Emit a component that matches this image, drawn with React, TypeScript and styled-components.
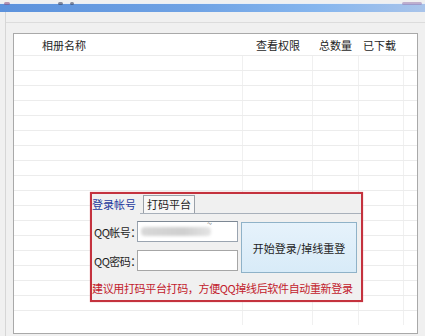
import React from "react";
import styled, { createGlobalStyle } from "styled-components";

const GlobalStyle = createGlobalStyle`
  html, body {
    margin: 0;
    padding: 0;
    background: #f0f0f0;
  }
  body {
    font-family: "Noto Sans CJK SC", "Noto Sans", sans-serif;
    font-size: 11px;
    color: #222;
    width: 425px;
    height: 336px;
    overflow: hidden;
  }
`;

const Window = styled.div`
  width: 425px;
  height: 336px;
  display: flex;
  flex-direction: column;
`;

const TitleBar = styled.div`
  height: 8px;
  margin-top: 3px;
  background: linear-gradient(90deg, #5c92dc 0%, #6fa2e4 45%, #86b6ee 75%, #a9c4ea 100%);
  position: relative;
  border-top: 1px solid #e8eef6;
`;

const TitleSmudge = styled.span<{ $left: number; $w: number; $color: string }>`
  position: absolute;
  top: -2px;
  left: ${(p) => p.$left}px;
  width: ${(p) => p.$w}px;
  height: 3px;
  border-radius: 2px;
  background: ${(p) => p.$color};
  opacity: 0.55;
  filter: blur(0.6px);
`;

const Body = styled.div`
  flex: 1;
  display: flex;
  flex-direction: column;
  margin-left: 5px;
  border-left: 1px solid #d6d6d6;
  background: #f0f0f0;
`;

const ToolStrip = styled.div`
  height: 10px;
  border-bottom: 1px solid #dcdcdc;
`;

const ListArea = styled.div`
  padding: 10px 6px 0 7px;
`;

const ListFrame = styled.div`
  position: relative;
  width: 403px;
  height: 299px;
  border: 1px solid #a9a9a9;
  background: #fff;
  overflow: hidden;
`;

const Cols = "229px 70px 46px 45px 1fr";

const HeaderRow = styled.div`
  display: grid;
  grid-template-columns: ${Cols};
  height: 21px;
  align-items: center;
  font-size: 11px;
  color: #1e1e1e;
`;

const HeadCell = styled.div<{ $pad: number }>`
  padding-left: ${(p) => p.$pad}px;
  white-space: nowrap;
`;

const Row = styled.div`
  display: grid;
  grid-template-columns: ${Cols};
  height: 15px;
  border-top: 1px solid #ececec;
  box-sizing: border-box;
`;

const Cell = styled.div`
  border-right: 1px solid #f0f0f0;
`;

const LoginPanel = styled.div`
  position: absolute;
  left: 76px;
  top: 158px;
  width: 269px;
  height: 106px;
  border: 2px solid #c4323e;
  background: #f0f0f0;
  box-shadow: 0 0 1px #e08088;
  display: flex;
  flex-direction: column;
`;

const TabBar = styled.div`
  display: flex;
  align-items: flex-end;
  height: 19px;
  border-bottom: 1px solid #a8b0ba;
`;

const Tab = styled.div<{ $active?: boolean }>`
  height: ${(p) => (p.$active ? 19 : 17)}px;
  line-height: ${(p) => (p.$active ? 19 : 17)}px;
  padding: 0 ${(p) => (p.$active ? 4 : 3)}px 0 ${(p) => (p.$active ? 0 : 3)}px;
  margin-left: ${(p) => (p.$active ? 0 : 3)}px;
  font-size: 11px;
  color: ${(p) => (p.$active ? "#1f3a9e" : "#1e1e1e")};
  background: ${(p) => (p.$active ? "#f0f0f0" : "#f7f7f7")};
  border: ${(p) => (p.$active ? "none" : "1px solid #9aa0a8")};
  border-bottom: none;
  margin-bottom: ${(p) => (p.$active ? -1 : 0)}px;
  white-space: nowrap;
`;

const TabPage = styled.div`
  flex: 1;
  display: flex;
  flex-direction: column;
  padding: 7px 0 0 2px;
`;

const FormRow = styled.div`
  display: flex;
  gap: 3px;
`;

const Fields = styled.div`
  display: flex;
  flex-direction: column;
  gap: 8px;
`;

const Field = styled.div`
  display: flex;
  align-items: center;
  gap: 2px;
`;

const Label = styled.span`
  width: 41px;
  font-size: 11px;
  color: #1e1e1e;
  white-space: nowrap;
  letter-spacing: -0.5px;
`;

const Input = styled.div<{ $filled?: boolean }>`
  position: relative;
  width: 99px;
  height: 19px;
  border: 1px solid ${(p) => (p.$filled ? "#9aa4b0" : "#a6a6a6")};
  border-top-color: ${(p) => (p.$filled ? "#7d8894" : "#a6a6a6")};
  background: #fff;
`;

const Blur = styled.span`
  position: absolute;
  left: 3px;
  top: 5px;
  width: 70px;
  height: 9px;
  border-radius: 4px;
  background: linear-gradient(90deg, #d8d8d8, #cfcfcf 60%, #e4e4e4);
  filter: blur(1.5px);
`;

const Tilde = styled.span`
  position: absolute;
  right: 25px;
  top: -5px;
  font-size: 9px;
  color: #777;
`;

const StartButton = styled.button`
  width: 116px;
  height: 51px;
  margin-top: 1px;
  border: 1px solid #8fb2c8;
  background: linear-gradient(180deg, #e6f2fb 0%, #d8ebf8 100%);
  font-family: inherit;
  font-size: 11px;
  color: #1e1e1e;
  padding: 0;
  cursor: pointer;
  white-space: nowrap;
`;

const Hint = styled.div`
  margin-top: 7px;
  margin-left: -2px;
  font-size: 11px;
  color: #c2202c;
  white-space: nowrap;
  letter-spacing: -0.35px;
`;

const rows = Array.from({ length: 18 });

export default function App() {
  return (
    <>
      <GlobalStyle />
      <Window>
        <TitleBar>
          <TitleSmudge $left={4} $w={6} $color="#8a4a7a" />
          <TitleSmudge $left={58} $w={5} $color="#333a55" />
          <TitleSmudge $left={70} $w={4} $color="#333a55" />
          <TitleSmudge $left={402} $w={20} $color="#9a7ab0" />
        </TitleBar>
        <Body>
          <ToolStrip />
          <ListArea>
            <ListFrame>
              <HeaderRow>
                <HeadCell $pad={28}>相册名称</HeadCell>
                <HeadCell $pad={13}>查看权限</HeadCell>
                <HeadCell $pad={6}>总数量</HeadCell>
                <HeadCell $pad={4}>已下载</HeadCell>
                <HeadCell $pad={0} />
              </HeaderRow>
              {rows.map((_, i) => (
                <Row key={i}>
                  <Cell />
                  <Cell />
                  <Cell />
                  <Cell />
                  <div />
                </Row>
              ))}
              <LoginPanel>
                <TabBar>
                  <Tab $active>登录帐号</Tab>
                  <Tab>打码平台</Tab>
                </TabBar>
                <TabPage>
                  <FormRow>
                    <Fields>
                      <Field>
                        <Label>QQ帐号：</Label>
                        <Input $filled>
                          <Blur />
                          <Tilde>~</Tilde>
                        </Input>
                      </Field>
                      <Field>
                        <Label>QQ密码：</Label>
                        <Input />
                      </Field>
                    </Fields>
                    <StartButton>开始登录/掉线重登</StartButton>
                  </FormRow>
                  <Hint>建议用打码平台打码，方便QQ掉线后软件自动重新登录</Hint>
                </TabPage>
              </LoginPanel>
            </ListFrame>
          </ListArea>
        </Body>
      </Window>
    </>
  );
}
